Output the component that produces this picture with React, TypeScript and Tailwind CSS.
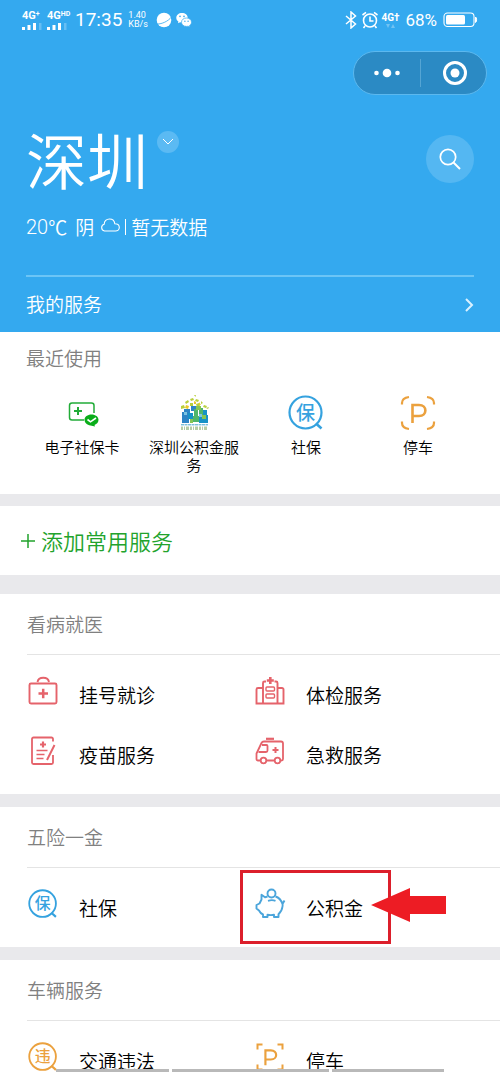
import type { ReactNode } from "react";

type IconProps = { className?: string };

function SignalBars({ label, sup }: { label: string; sup: string }) {
  return (
    <span className="flex w-6 flex-col items-start">
      <span className="flex h-3 items-start font-['Roboto',sans-serif] text-[11px] leading-3 font-bold">
        {label}
        <span className="text-[7px] leading-2">{sup}</span>
      </span>
      <svg viewBox="0 0 20 7" className="mt-px h-[7px] w-5" fill="currentColor" aria-hidden="true">
        <rect x="0" y="4" width="3" height="3" />
        <rect x="5.5" y="2" width="3" height="5" />
        <rect x="11" y="0" width="3" height="7" />
        <rect x="17" y="0" width="2.5" height="7" opacity="0.25" />
      </svg>
    </span>
  );
}

function StatusBar() {
  return (
    <div className="flex h-10 items-center justify-between pr-[22px] pl-[22px]">
      <div className="flex items-center">
        <SignalBars label="4G" sup="+" />
        <span className="w-px" />
        <SignalBars label="4G" sup="HD" />
        <span className="ml-1 font-['Roboto',sans-serif] text-[19px] leading-6 font-normal">17:35</span>
        <span className="ml-1.5 flex w-6 flex-col font-['Roboto',sans-serif] text-[9px] leading-[9px] font-normal">
          <span>1.40</span>
          <span>KB/s</span>
        </span>
        <svg viewBox="0 0 16 16" className="ml-1 size-4" aria-hidden="true">
          <circle cx="8" cy="8" r="7.300" fill="#fff" />
          <path d="M0 12C5 12.500 12 9.500 15.500 5" fill="none" stroke="#34a9ef" strokeWidth=".8" />
        </svg>
        <svg viewBox="0 0 16 16" className="ml-1 size-4" aria-hidden="true">
          <path d="M6 1C2.700 1 .3 3.100.3 5.800c0 1.600.8 2.900 2.100 3.700L2 11.300l2.100-1.100c.6.2 1.200.2 1.900.2 3.200 0 5.700-2 5.700-4.700S9.200 1 6 1z" fill="#fff" />
          <path d="M10.500 6c-2.900 0-5 1.800-5 4.200s2.200 4.200 5 4.200c.6 0 1.100-.1 1.600-.2l1.800 1-.4-1.600c1.200-.8 2-2 2-3.400C15.500 7.800 13.300 6 10.500 6z" fill="#fff" stroke="#34a9ef" strokeWidth=".7" />
          <g fill="#34a9ef">
            <circle cx="4" cy="4.400" r=".8" />
            <circle cx="8" cy="4.400" r=".8" />
            <circle cx="8.900" cy="9.200" r=".7" />
            <circle cx="12.100" cy="9.200" r=".7" />
          </g>
        </svg>
      </div>
      <div className="flex items-center">
        <svg viewBox="0 0 12 18" className="h-[18px] w-3" fill="none" stroke="currentColor" strokeWidth="1.500" aria-hidden="true">
          <path d="M1 5l9.500 8L6 17V1l4.500 4L1 13" />
        </svg>
        <svg viewBox="0 0 18 18" className="ml-1 size-[18px]" fill="none" stroke="currentColor" strokeWidth="1.600" aria-hidden="true">
          <circle cx="9" cy="9.500" r="6.500" />
          <path d="M9 5.500V10h3.500M1.500 4L5 1.300M13 1.300L16.500 4M4 15l-1.500 2M14 15l1.500 2" />
        </svg>
        <span className="ml-0.5 flex w-5 flex-col">
          <span className="font-['Roboto',sans-serif] text-[10px] leading-3 font-bold">4G†</span>
          <svg viewBox="0 0 20 5" className="h-[5px] w-5" fill="currentColor" opacity="0.3" aria-hidden="true">
            <path d="M5 0h4L7 4zM10 4h4l-2-4z" />
          </svg>
        </span>
        <span className="ml-1 font-['Roboto',sans-serif] text-[17px] leading-6 font-normal">68%</span>
        <svg viewBox="0 0 35 16" className="ml-1.5 h-4 w-[35px]" aria-hidden="true">
          <rect x="1" y="1" width="30" height="13.500" rx="3.500" fill="none" stroke="#fff" strokeWidth="1.100" />
          <rect x="3" y="3" width="19" height="9.500" rx="1.500" fill="#fff" />
          <path d="M32.500 5c1.500.5 1.500 5 0 5.500z" fill="#fff" stroke="#fff" />
        </svg>
      </div>
    </div>
  );
}

function Capsule() {
  return (
    <div className="mt-[11px] mr-[13px] flex h-11 w-[134px] items-center self-end rounded-full border border-[#5cb8ee] bg-[#2b8ac4]">
      <button type="button" aria-label="更多" className="flex w-[66px] justify-center">
        <svg viewBox="0 0 28 10" className="h-2.5 w-7" fill="#fff" aria-hidden="true">
          <circle cx="3.500" cy="5" r="2.300" />
          <circle cx="14" cy="5" r="4.300" />
          <circle cx="24.500" cy="5" r="2.300" />
        </svg>
      </button>
      <span className="h-7 w-px bg-[#55a5d4]" />
      <button type="button" aria-label="关闭" className="flex flex-1 justify-center pl-[3px]">
        <svg viewBox="0 0 26 26" className="size-[26px]" aria-hidden="true">
          <circle cx="13" cy="13" r="10.500" fill="none" stroke="#fff" strokeWidth="3" />
          <circle cx="13" cy="13" r="4.500" fill="#fff" />
        </svg>
      </button>
    </div>
  );
}

function CardIcon({ className }: IconProps) {
  return (
    <svg viewBox="0 0 36 36" className={className} fill="none" stroke="#22ac38" aria-hidden="true">
      <path d="M20 25H8a2.500 2.500 0 0 1-2.500-2.500v-12A2.500 2.500 0 0 1 8 8h19.500A2.500 2.500 0 0 1 30 10.500V18" strokeWidth="1.500" />
      <path d="M10 16h8M14 12v8" strokeWidth="2" />
      <path d="M27.500 19.500c-4 0-7 2.300-7 5.300s2.500 5.200 6 5.700l4.500 1-.5-1.600c2.500-.8 4-2.700 4-5.100 0-3-3-5.300-7-5.300z" fill="#09ad19" stroke="none" />
      <path d="M23.500 24.500l3 2.300 5.500-3.800" stroke="#fff" strokeWidth="1.600" />
    </svg>
  );
}

function HouseFundIcon({ className }: IconProps) {
  return (
    <svg viewBox="0 0 36 36" className={className} aria-hidden="true">
      <g fill="#b9cf3c">
        <path d="M18 0l2-.5-.5 2.500zM14 4l3-1 1 2-3 1zM9 7l3-2 1 2-3 2zM5 11l3-1 1 3-4 1z" />
        <path d="M20 4l3 1-1 2-3-1zM25 6l2 2-2 1zM14 8h3v3h-3zM20 9l3-1 1 3-3 1z" />
        <path d="M28 10l3 1-1 2-3-1zM30 13l3-1-1 2z" />
      </g>
      <g fill="#e9c928">
        <path d="M10 10l3 1-1 3-3-1zM18 6l2 1v2h-2zM23 7l2 3h-2z" />
      </g>
      <path d="M8 14h6v5H8zM15 11h5v5h-5zM6 17h7v11H6z" fill="#2d84c5" />
      <path d="M12 18h5v6h-5zM26 15h5v5h-5zM23 20h9v8h-9z" fill="#1692c6" />
      <path d="M18 14h4v7h-4zM23 13h4v7h-4zM17 21h6v6h-6z" fill="#4fb66a" />
      <path d="M20 11h5v4h-5zM26 20h4v4h-4zM14 24h3v4h-3z" fill="#85c552" />
      <path d="M8 17h3v3H8zM23 19h3v3h-3z" fill="#7cc4e2" />
      <path d="M5 29.800h27" stroke="#45a5cc" strokeWidth="1" strokeDasharray="3 .5" />
      <path d="M5 33.300h27" stroke="#b5cda5" strokeWidth="3.500" strokeDasharray="2 1 1 1 3 1" />
    </svg>
  );
}

function BubbleIcon({ className, char, tone }: IconProps & { char: string; tone: "blue" | "orange" }) {
  const color = tone === "blue" ? "#35a2df" : "#eba13e";
  return (
    <svg viewBox="0 0 36 36" className={className} aria-hidden="true">
      <circle cx="17.500" cy="17.500" r="16" fill="none" stroke={color} strokeWidth="2.200" />
      <path d="M28 28.500l5.500 5" stroke={color} strokeWidth="2.600" />
      <text x="17.500" y="24.500" textAnchor="middle" fontSize="19" fontWeight="500" fill={color} fontFamily="Noto Sans CJK SC, sans-serif">
        {char}
      </text>
    </svg>
  );
}

function ParkingIcon({ className, round }: IconProps & { round?: boolean }) {
  return (
    <svg viewBox="0 0 36 36" className={className} fill="none" stroke="#eba13e" aria-hidden="true">
      {round ? (
        <path d="M2 9.500V8q0-5 7-6M27 2q7 1 7 6v1.500M2 26.500V28q0 5 7 6M27 34q7-1 7-6v-1.500" strokeWidth="2.200" />
      ) : (
        <path d="M3 9V3h6M27 3h6v6M3 27v6h6M27 33h6v-6" strokeWidth="2.400" />
      )}
      <path d="M12.500 28V10h6.500c8.500 0 8.500 11 0 11h-6.500" strokeWidth="2.600" />
    </svg>
  );
}

function MedKitIcon({ className }: IconProps) {
  return (
    <svg viewBox="0 0 32 32" className={className} fill="none" stroke="#e5636b" aria-hidden="true">
      <rect x="2.500" y="8.500" width="27" height="20" rx="1.500" strokeWidth="1.900" />
      <path d="M10.500 7C11.500 1.300 21 1.300 22 7" strokeWidth="1.900" />
      <path d="M11.500 18.500h9.500M16.200 13.800v9.500" strokeWidth="2.500" />
    </svg>
  );
}

function VaccineIcon({ className }: IconProps) {
  return (
    <svg viewBox="0 0 32 32" className={className} fill="none" stroke="#e5636b" strokeWidth="1.800" aria-hidden="true">
      <path d="M26 6.500V4a1.500 1.500 0 0 0-1.500-1.500h-18A1.500 1.500 0 0 0 5 4v23.500A1.500 1.500 0 0 0 6.500 29h18a1.500 1.500 0 0 0 1.500-1.500V20" />
      <path d="M27.500 10l-7.500 15" strokeWidth="2" />
      <path d="M13 9.500h6M16 6.500v6" strokeWidth="2.200" />
      <path d="M9.500 15.500h11M9.500 19.500h8M9.500 23.500h7" strokeWidth="1.400" />
    </svg>
  );
}

function HospitalIcon({ className }: IconProps) {
  return (
    <svg viewBox="0 0 32 32" className={className} fill="none" stroke="#e5636b" strokeWidth="1.900" aria-hidden="true">
      <path d="M9 28.500V8A1.500 1.500 0 0 1 10.500 6.500h1.500M20.500 6.500h1.500A1.500 1.500 0 0 1 23.500 8v20.500" />
      <path d="M9 13H4a1.500 1.500 0 0 0-1.500 1.500v14h27v-14A1.500 1.500 0 0 0 28 13h-4.500" />
      <path d="M12.800 5.500h7M16.300 2v7" strokeWidth="2.600" />
      <rect x="12" y="12" width="8.500" height="4" rx="1" strokeWidth="1.400" />
      <rect x="12" y="19" width="8.500" height="4" rx="1" strokeWidth="1.400" />
    </svg>
  );
}

function AmbulanceIcon({ className }: IconProps) {
  return (
    <svg viewBox="0 0 32 32" className={className} fill="none" stroke="#e5636b" strokeWidth="1.800" aria-hidden="true">
      <path d="M6.500 25.500H4A1.500 1.500 0 0 1 2.500 24v-5.500L7.500 8Q8.200 6.500 10 6.500h17a2 2 0 0 1 2 2V24a1.500 1.500 0 0 1-1.500 1.500H26.500M12.500 25.500h8" />
      <path d="M12 3.800h8" strokeWidth="2.200" />
      <path d="M8 10h4.500a1 1 0 0 1 1 1v4.500a1.500 1.500 0 0 1-1.500 1.500H4.500" />
      <path d="M18.500 15h6M21.500 12v6" strokeWidth="2" />
      <circle cx="9.500" cy="25.500" r="2.800" />
      <circle cx="23.500" cy="25.500" r="2.800" />
    </svg>
  );
}

function PiggyIcon({ className }: IconProps) {
  return (
    <svg viewBox="0 0 32 32" className={className} fill="none" stroke="#4ba5db" strokeWidth="1.900" strokeLinejoin="round" aria-hidden="true">
      <circle cx="17.500" cy="5.500" r="4" />
      <path d="M14 12.800q4-1.300 7.500 0" />
      <path d="M13.500 8.500L11 9.300 7.500 6.800v4.700L5.500 15.500 2.500 17v3.500L5 22.500q1.500 3 4 4v2.500h4.500v-2.200q3.500.6 6.500 0v2.200h4.500v-2.700Q28 23 28.500 18.500q.3-1.500 0-2.500L30.500 12.500M21.500 8.500q5 1.500 7 7.500" />
    </svg>
  );
}

type Service = { name: string; icon: ReactNode };

const recent: Service[] = [
  { name: "电子社保卡", icon: <CardIcon className="size-9" /> },
  { name: "深圳公积金服务", icon: <HouseFundIcon className="size-9" /> },
  { name: "社保", icon: <BubbleIcon char="保" tone="blue" className="size-9" /> },
  { name: "停车", icon: <ParkingIcon round className="size-9" /> },
];

const medical: Service[] = [
  { name: "挂号就诊", icon: <MedKitIcon className="size-8" /> },
  { name: "体检服务", icon: <HospitalIcon className="size-8" /> },
  { name: "疫苗服务", icon: <VaccineIcon className="size-8" /> },
  { name: "急救服务", icon: <AmbulanceIcon className="size-8" /> },
];

const insurance: Service[] = [
  { name: "社保", icon: <BubbleIcon char="保" tone="blue" className="mx-px size-[30px]" /> },
  { name: "公积金", icon: <PiggyIcon className="size-8" /> },
];

const vehicle: Service[] = [
  { name: "交通违法", icon: <BubbleIcon char="违" tone="orange" className="mx-px size-[30px]" /> },
  { name: "停车", icon: <ParkingIcon className="mx-px size-[30px]" /> },
];

function Callout() {
  return (
    <>
      <span className="pointer-events-none absolute -top-2 -left-3.5 h-[74px] w-[151px] border-3 border-[#dc1f2b]" />
      <svg viewBox="0 0 76 34" className="pointer-events-none absolute top-2.5 left-[117px] h-[34px] w-[76px]" fill="#ed1c24" aria-hidden="true">
        <path d="M0 17L39 0v8h36v18H39v8z" />
      </svg>
    </>
  );
}

function Section({ title, items, highlight }: { title: string; items: Service[]; highlight?: string }) {
  return (
    <section className="bg-white pb-[9px] pl-[27px]">
      <h2 className="flex h-[61px] items-center border-b border-[#e4e4e4] text-[19px] font-[350] text-[#808080]">{title}</h2>
      <ul className="grid grid-cols-2 pt-2.5 pr-[19px]">
        {items.map((s) => (
          <li key={s.name} className="relative">
            <a href="#" className="flex h-[60px] items-center">
              <span className="mb-2 flex">{s.icon}</span>
              <span className="ml-5 text-[19px] leading-5 text-black">{s.name}</span>
            </a>
            {highlight === s.name && <Callout />}
          </li>
        ))}
      </ul>
    </section>
  );
}

export default function App() {
  return (
    <main className="relative h-screen overflow-hidden bg-[#e9e9ec] font-['Noto_Sans_CJK_SC',sans-serif] font-[350]">
      <header className="flex flex-col bg-[#34a9ef] text-white">
        <StatusBar />
        <Capsule />
        <div className="mt-[22px] flex h-[84px] items-start px-[26px]">
          <h1 className="text-[61px] leading-[84px] font-[350]">深圳</h1>
          <button type="button" aria-label="切换城市" className="mt-3.5 ml-[9px] flex size-[22px] items-center justify-center rounded-full bg-[#5bbaf3]">
            <svg viewBox="0 0 12 8" className="h-2 w-3" fill="none" stroke="#fff" strokeWidth="1" aria-hidden="true">
              <path d="M1 1l5 5 5-5" />
            </svg>
          </button>
          <button type="button" aria-label="搜索" className="mt-[18px] ml-auto flex size-12 items-center justify-center rounded-full bg-[#54b7f2]">
            <svg viewBox="0 0 22 22" className="size-[22px]" fill="none" stroke="#fff" strokeWidth="1.700" aria-hidden="true">
              <circle cx="9" cy="9" r="7.700" />
              <path d="M14.500 14.500L21 21" strokeWidth="2" />
            </svg>
          </button>
        </div>
        <p className="mt-3 flex h-7 items-center px-[26px] text-[19px]">
          <span className="font-['Roboto','Noto_Sans_CJK_SC',sans-serif] text-[20px] font-light">20</span>
          <span>℃</span>
          <span className="ml-2">阴</span>
          <svg viewBox="0 0 20 14" className="mb-1 ml-1.5 h-3.5 w-5" fill="none" stroke="#fff" strokeWidth="1.100" aria-hidden="true">
            <path d="M4.500 13a3.500 3.500 0 0 1-.3-6.800C4.200 3 6.500 1 9.500 1s5 2 5.300 4.800C17.500 5.800 19.300 7.500 19.300 9.500S17.500 13 15.500 13z" />
          </svg>
          <span className="mx-[5px] h-4 w-px bg-white" />
          <span>暂无数据</span>
        </p>
        <div className="mx-[26px] mt-[34px] border-t-2 border-[#6cc5f6]">
          <a href="#" className="flex h-[55px] items-center justify-between text-[19px]">
            我的服务
            <svg viewBox="0 0 9 14" className="h-3.5 w-[9px]" fill="none" stroke="#d9f1ff" strokeWidth="2" aria-hidden="true">
              <path d="M1 1l6 6-6 6" />
            </svg>
          </a>
        </div>
      </header>

      <section className="h-[162px] bg-white px-[26px]">
        <h2 className="flex h-[53px] items-center text-[19px] font-[350] text-[#808080]">最近使用</h2>
        <ul className="grid grid-cols-4 pt-2.5">
          {recent.map((s) => (
            <li key={s.name}>
              <a href="#" className="flex flex-col items-center px-2.5 text-center text-[15px] leading-[18px] text-black">
                {s.icon}
                <span className="mt-[7px]">{s.name}</span>
              </a>
            </li>
          ))}
        </ul>
      </section>

      <button type="button" className="mt-3 flex h-[69px] w-full items-center gap-1.5 bg-white px-[21px] text-[22px] text-[#22a32c]">
        <svg viewBox="0 0 14 14" className="size-3.5" stroke="currentColor" strokeWidth="1.500" aria-hidden="true">
          <path d="M0 7h14M7 0v14" />
        </svg>
        添加常用服务
      </button>

      <div className="mt-[19px] flex flex-col gap-[13px]">
        <Section title="看病就医" items={medical} />
        <Section title="五险一金" items={insurance} highlight="公积金" />
        <Section title="车辆服务" items={vehicle} />
      </div>

      <div className="absolute inset-x-0 bottom-0 flex h-[3px] gap-[3px] pr-14 pl-14" aria-hidden="true">
        <span className="flex-1 bg-[#b9b9b9]" />
        <span className="w-[157px] bg-[#b9b9b9]" />
        <span className="flex-1 bg-[#b9b9b9]" />
      </div>
    </main>
  );
}
